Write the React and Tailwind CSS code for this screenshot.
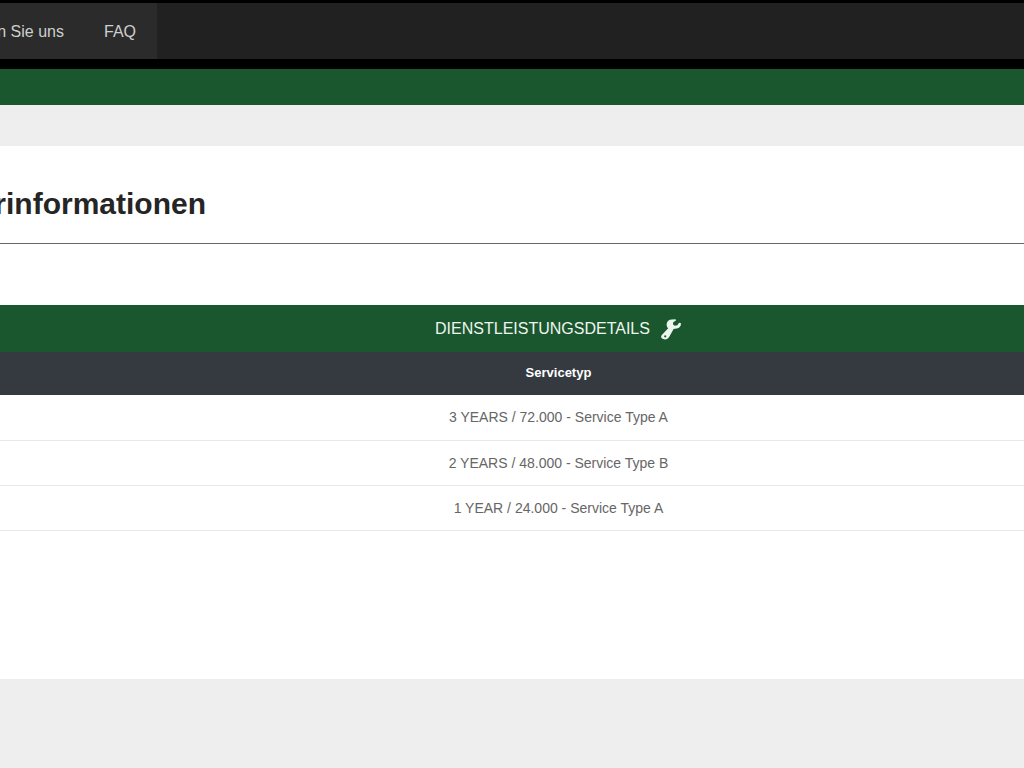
import React from 'react'

const navLinks = ['n Sie uns', 'FAQ'];

const services = [
  '3 YEARS / 72.000 - Service Type A',
  '2 YEARS / 48.000 - Service Type B',
  '1 YEAR / 24.000 - Service Type A',
];

function WrenchIcon() {
  return (
    <svg className="h-[22px] w-[22px]" viewBox="0 0 22 22" fill="currentColor" aria-hidden="true">
      <path
        fillRule="evenodd"
        d="M6.6 6.2 C6.8 3.6 9 1.6 12 1.6 L15.6 1.2 L16 2.4 L13.2 4.2 L13 6.4 L14.8 7.8 L17.4 7.2 L19 4.8 L21 5.2 C21.2 8 19.4 10.2 16.8 10.6 L13.6 11 L10 17.6 C8.8 20.2 7 21.6 4.8 21.6 L2 20.6 C1 19.6 .8 18.4 1.6 17.2 L4.2 14.4 L8.2 10.2 C7 9.2 6.6 7.8 6.6 6.2 Z M5.2 17.2 a1.1 1.1 0 1 0 .01 0 Z"
      />
    </svg>
  )
}

function App() {
  return (
    <div className="min-h-screen overflow-hidden bg-[#eeeeee] font-['Liberation_Sans',Arial,sans-serif]">
      <header className="border-t-3 border-b-10 border-black bg-[#212121]">
        <nav className="flex h-14 w-[157px] items-center justify-end gap-10 overflow-hidden bg-[#2b2b2b] pt-0.5 pr-[21px]">
          {navLinks.map(link => (
            <a key={link} href="#" className="shrink-0 whitespace-nowrap text-base text-[#cfcfcf]">
              {link}
            </a>
          ))}
        </nav>
      </header>
      <div className="h-9 bg-[#1a572e]" />

      <main className="mt-[41px] bg-white pt-9 pb-[148px]">
        <div className="flex h-[62px] w-full border-b border-[#666666]">
          <h1 className="flex h-[42px] w-[206px] items-center justify-end overflow-hidden text-[30px] font-bold whitespace-nowrap text-[#252525]">
            rinformationen
          </h1>
        </div>

        <table className="mt-[61px] w-full border-collapse text-center">
          <caption className="h-[47px] bg-[#1a572e] pl-[93px] text-base text-[#eef5ee]">
            <span className="flex h-full items-center justify-center gap-2.5">
              DIENSTLEISTUNGSDETAILS
              <WrenchIcon />
            </span>
          </caption>
          <thead>
            <tr className="h-[43px] bg-[#343a40]">
              <th className="pb-0.5 pl-[93px] text-[13px] font-bold text-white">Servicetyp</th>
            </tr>
          </thead>
          <tbody>
            {services.map(service => (
              <tr key={service} className="h-[45px] border-b border-[#e8e8e8]">
                <td className="pl-[93px] text-sm text-[#666666]">{service}</td>
              </tr>
            ))}
          </tbody>
        </table>
      </main>
    </div>
  )
}

export default App
